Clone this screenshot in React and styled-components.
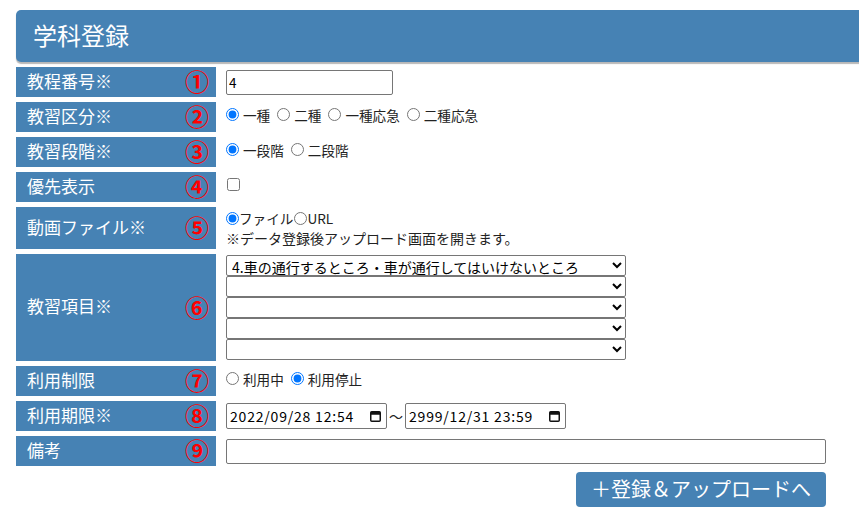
import React from "react";
import styled, { createGlobalStyle } from "styled-components";

const Global = createGlobalStyle`
  html, body { margin: 0; padding: 0; background: #fff; overflow-x: hidden; }
  body { font-family: "Noto Sans CJK JP", "Noto Sans", sans-serif; color: #222; }
`;

const Page = styled.div`
  padding: 10px 0 16px 16px;
`;

const Header = styled.div`
  height: 52px;
  margin-right: -12px;
  background: #4682b4;
  border-radius: 5px;
  box-shadow: 0 2px 1px rgba(0, 0, 0, 0.28);
  display: flex;
  align-items: center;
  padding: 0 0 2px 17px;
  box-sizing: border-box;
  color: #fff;
  font-size: 24px;
  line-height: 1;
`;

const Form = styled.div`
  display: grid;
  grid-template-columns: 200px 1fr;
  column-gap: 10px;
  row-gap: 5px;
  margin-top: 5px;
`;

const Label = styled.div`
  background: #4682b4;
  color: #fff;
  font-size: 17px;
  line-height: 1.2;
  min-height: 30px;
  display: flex;
  align-items: center;
  justify-content: space-between;
  padding: 0 7px 2px 11px;
  box-sizing: border-box;
`;

const Num = styled.span`
  color: #ff0000;
  font-size: 24px;
  font-weight: 700;
  line-height: 1;
`;

const Cell = styled.div`
  display: flex;
  flex-direction: ${(p) => (p.$column ? "column" : "row")};
  align-items: ${(p) => (p.$column ? "flex-start" : "center")};
  justify-content: ${(p) => (p.$column ? "center" : "flex-start")};
  padding: ${(p) => (p.$column ? "1px 0" : p.$raise ? "0 0 5px" : "0")};
  font-size: 13.6px;
  min-height: 30px;
  box-sizing: border-box;
`;

const Line = styled.div`
  display: flex;
  align-items: center;
  height: 20px;
  line-height: 20px;
  font-size: ${(p) => p.$size || 13.6}px;
`;

const TextInput = styled.input`
  width: ${(p) => p.$w}px;
  height: 25px;
  box-sizing: border-box;
  border: 1px solid #767676;
  border-radius: 2px;
  padding: 1px 2px;
  font-family: "Noto Sans CJK JP", sans-serif;
  font-size: 13.5px;
  color: #000;
  margin: 0;
`;

const Option = styled.label`
  display: inline-flex;
  align-items: center;
  margin-right: ${(p) => (p.$tight ? 1 : 7)}px;
  white-space: nowrap;
`;

const Radio = styled.input.attrs({ type: "radio" })`
  width: 13px;
  height: 13px;
  margin: 0 ${(p) => (p.$tight ? 0 : 4)}px 0 0;
`;

const Check = styled.input.attrs({ type: "checkbox" })`
  width: 13px;
  height: 13px;
  margin: 0 0 0 1px;
`;

const SelectStack = styled.div`
  display: flex;
  flex-direction: column;
`;

const Select = styled.select`
  display: block;
  width: 400px;
  height: 21px;
  box-sizing: border-box;
  margin: 0;
  font-family: "Noto Sans CJK JP", sans-serif;
  font-size: 14px;
  line-height: 1;
  color: #000;
  border: 1px solid #767676;
  border-radius: 2px;
  background: #fff;
  padding: 0 0 0 1px;
`;

const DateBox = styled.div`
  width: 161px;
  height: 26px;
  box-sizing: border-box;
  border: 1px solid #767676;
  border-radius: 2px;
  display: flex;
  align-items: center;
  padding: 0 5px 0 3px;
  background: #fff;
`;

const DateText = styled.input`
  flex: 1;
  min-width: 0;
  border: none;
  outline: none;
  padding: 0;
  margin: 0;
  font-family: "Noto Sans CJK JP", sans-serif;
  font-size: 14px;
  letter-spacing: 0.8px;
  color: #000;
  background: transparent;
`;

const Tilde = styled.span`
  width: 18px;
  text-align: center;
  font-size: 14px;
`;

const Button = styled.button`
  grid-column: 2;
  margin: 1px 0 0 350px;
  width: 250px;
  height: 35px;
  border: none;
  border-radius: 4px;
  background: #4682b4;
  color: #fff;
  font-family: "Noto Sans CJK JP", sans-serif;
  font-size: 20px;
  line-height: 1;
  padding: 0 0 2px;
  cursor: pointer;
`;

const CalendarIcon = () => (
  <svg width="11" height="12" viewBox="0 0 11 12" aria-hidden="true">
    <rect x="0.75" y="1.75" width="9.5" height="9.5" rx="1" fill="none" stroke="#111" strokeWidth="1.5" />
    <rect x="0.75" y="1.75" width="9.5" height="3" fill="#111" />
  </svg>
);

const DateField = ({ value }) => (
  <DateBox>
    <DateText defaultValue={value} />
    <CalendarIcon />
  </DateBox>
);

const Row = ({ label, num, children, column, raise }) => (
  <>
    <Label>
      <span>{label}</span>
      <Num>{num}</Num>
    </Label>
    <Cell $column={column} $raise={raise}>{children}</Cell>
  </>
);

export default function App() {
  return (
    <>
      <Global />
      <Page>
        <Header>学科登録</Header>
        <Form>
          <Row label="教程番号※" num="①">
            <TextInput $w={167} defaultValue="4" />
          </Row>
          <Row label="教習区分※" num="②" raise>
            <Option><Radio name="k" defaultChecked />一種</Option>
            <Option><Radio name="k" />二種</Option>
            <Option><Radio name="k" />一種応急</Option>
            <Option><Radio name="k" />二種応急</Option>
          </Row>
          <Row label="教習段階※" num="③" raise>
            <Option><Radio name="d" defaultChecked />一段階</Option>
            <Option><Radio name="d" />二段階</Option>
          </Row>
          <Row label="優先表示" num="④" raise>
            <Check />
          </Row>
          <Row label="動画ファイル※" num="⑤" column>
            <Line>
              <Option $tight><Radio $tight name="f" defaultChecked />ファイル</Option>
              <Option $tight><Radio $tight name="f" />URL</Option>
            </Line>
            <Line $size={14}>※データ登録後アップロード画面を開きます。</Line>
          </Row>
          <Row label="教習項目※" num="⑥" column>
            <SelectStack>
              <Select defaultValue="4">
                <option value="4">4.車の通行するところ・車が通行してはいけないところ</option>
              </Select>
              <Select><option></option></Select>
              <Select><option></option></Select>
              <Select><option></option></Select>
              <Select><option></option></Select>
            </SelectStack>
          </Row>
          <Row label="利用制限" num="⑦" raise>
            <Option><Radio name="r" />利用中</Option>
            <Option><Radio name="r" defaultChecked />利用停止</Option>
          </Row>
          <Row label="利用期限※" num="⑧">
            <DateField value="2022/09/28 12:54" />
            <Tilde>〜</Tilde>
            <DateField value="2999/12/31 23:59" />
          </Row>
          <Row label="備考" num="⑨">
            <TextInput $w={600} />
          </Row>
          <Button>＋登録＆アップロードへ</Button>
        </Form>
      </Page>
    </>
  );
}
